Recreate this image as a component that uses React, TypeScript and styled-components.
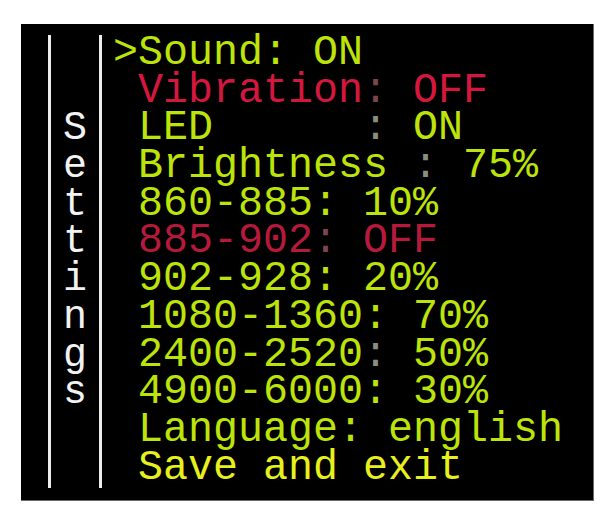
import React from "react";
import styled, { createGlobalStyle } from "styled-components";

type Tone = "lime" | "red" | "darkred" | "yellow";

interface Part {
  text: string;
  dim?: boolean;
}

interface IRow {
  tone: Tone;
  parts: Part[];
}

const ROW_H = 37.7;

const toneColor: Record<Tone, string> = {
  lime: "#bde40a",
  red: "#d4173f",
  darkred: "#b51a3c",
  yellow: "#e8f01c",
};

const rows: IRow[] = [
  { tone: "lime", parts: [{ text: ">Sound: ON" }] },
  {
    tone: "red",
    parts: [{ text: " Vibration" }, { text: ":", dim: true }, { text: " OFF" }],
  },
  {
    tone: "lime",
    parts: [{ text: " LED      " }, { text: ":", dim: true }, { text: " ON" }],
  },
  {
    tone: "lime",
    parts: [{ text: " Brightness " }, { text: ":", dim: true }, { text: " 75%" }],
  },
  { tone: "lime", parts: [{ text: " 860-885: 10%" }] },
  {
    tone: "darkred",
    parts: [{ text: " 885-902" }, { text: ":", dim: true }, { text: " OFF" }],
  },
  { tone: "lime", parts: [{ text: " 902-928: 20%" }] },
  { tone: "lime", parts: [{ text: " 1080-1360: 70%" }] },
  {
    tone: "lime",
    parts: [{ text: " 2400-2520" }, { text: ":", dim: true }, { text: " 50%" }],
  },
  { tone: "lime", parts: [{ text: " 4900-6000: 30%" }] },
  { tone: "lime", parts: [{ text: " Language: english" }] },
  { tone: "yellow", parts: [{ text: " Save and exit" }] },
];

const GlobalStyle = createGlobalStyle`
  html, body {
    margin: 0;
    padding: 0;
    background: #ffffff;
  }
`;

const Page = styled.div`
  padding: 24px 0 0 21px;
`;

const Screen = styled.section`
  box-sizing: border-box;
  width: 573px;
  height: 477px;
  background: #000;
  border-right: 1px solid #6a6a6a;
  border-bottom: 1px solid #6a6a6a;
  padding: 11px 0 0 27px;
  display: flex;
  align-items: flex-start;
  font-family: "Liberation Mono", "DejaVu Sans Mono", monospace;
`;

const Sidebar = styled.aside`
  box-sizing: border-box;
  width: 54px;
  height: 453px;
  border-left: 3px solid #ececec;
  border-right: 3px solid #ececec;
  padding-top: ${ROW_H * 2}px;
  display: flex;
  flex-direction: column;
  align-items: center;
`;

const Letter = styled.span`
  display: block;
  color: #f2f2f2;
  font-size: 40px;
  line-height: ${ROW_H}px;
  height: ${ROW_H}px;
`;

const Menu = styled.div`
  margin-left: 11px;
  display: flex;
  flex-direction: column;
`;

const Row = styled.div<{ $tone: Tone }>`
  white-space: pre;
  font-size: 41.67px;
  line-height: ${ROW_H}px;
  height: ${ROW_H}px;
  color: ${(p) => toneColor[p.$tone]};
`;

const Dim = styled.span<{ $tone: Tone }>`
  color: ${(p) => (p.$tone === "lime" ? "#8a8f80" : "#7a4650")};
`;

const App = () => {
  return (
    <Page>
      <GlobalStyle />
      <Screen>
        <Sidebar>
          {"Settings".split("").map((ch, i) => (
            <Letter key={i}>{ch}</Letter>
          ))}
        </Sidebar>
        <Menu>
          {rows.map((row, i) => (
            <Row key={i} $tone={row.tone}>
              {row.parts.map((part, j) =>
                part.dim ? (
                  <Dim key={j} $tone={row.tone}>
                    {part.text}
                  </Dim>
                ) : (
                  <React.Fragment key={j}>{part.text}</React.Fragment>
                )
              )}
            </Row>
          ))}
        </Menu>
      </Screen>
    </Page>
  );
};

export default App;
